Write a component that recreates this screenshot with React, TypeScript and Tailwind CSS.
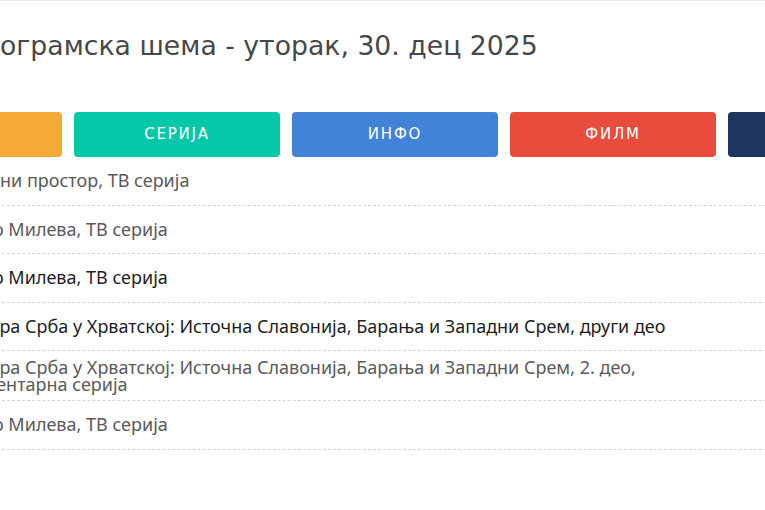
import React from "react";

interface Row {
  title: string;
  active?: boolean;
  pad?: string;
}

const categories = [
  { label: "ЗАБАВА", color: "bg-[#f5aa35]" },
  { label: "СЕРИЈА", color: "bg-[#05c8a8]" },
  { label: "ИНФО", color: "bg-[#4282d7]" },
  { label: "ФИЛМ", color: "bg-[#e84c3d]" },
  { label: "СПОРТ", color: "bg-[#1c365f]" },
];

// the schedule column starts left of the visible window, like the reference
const rows: Row[] = [
  { title: "ни простор, ТВ серија", pad: "pl-[58px]" },
  { title: "о Милева, ТВ серија", pad: "pl-[51px]" },
  { title: "о Милева, ТВ серија", active: true, pad: "pl-[51px]" },
  {
    title:
      "Култура Срба у Хрватској: Источна Славонија, Барања и Западни Срем, други део",
    active: true,
    pad: "indent-[10px]",
  },
  {
    title:
      "Култура Срба у Хрватској: Источна Славонија, Барања и Западни Срем, 2. део, документарна серија",
    pad: "indent-[10px]",
  },
  { title: "о Милева, ТВ серија", pad: "pl-[51px]" },
];

export default function App() {
  return (
    <div
      className="w-[765px] h-[510px] overflow-hidden bg-white border-t border-[#ececec]"
      style={{ fontFamily: '"Noto Sans", "Open Sans", sans-serif' }}
    >
      <h1
        className="mt-[25px] h-[40px] text-[26.7px] leading-[40px] text-[#474747] whitespace-nowrap"
        style={{ fontFamily: '"DejaVu Sans", "Noto Sans", sans-serif' }}
      >
        ограмска шема - уторак, 30. дец 2025
      </h1>

      <div className="mt-[46px] flex gap-[12px] -ml-[144px]">
        {categories.map((c) => (
          <div
            key={c.label}
            className={`${c.color} w-[206px] h-[45px] shrink-0 rounded-[4px] flex items-center justify-center text-white text-[15px] tracking-[1.8px]`}
            style={{ fontFamily: '"DejaVu Sans", sans-serif' }}
          >
            {c.label}
          </div>
        ))}
      </div>

      <div className="w-[880px] -ml-[58px]">
        {rows.map((r, i) => (
          <div
            key={i}
            className="min-h-[48.5px] py-[7.5px] flex items-center border-b border-dashed border-[#d4d4d4]"
          >
            <p
              className={`max-w-[792px] text-[18px] leading-[17px] ${
                r.active ? "text-[#1e1e1e]" : "text-[#5a5a5a]"
              } ${r.pad ?? ""}`}
            >
              {r.title}
            </p>
          </div>
        ))}
      </div>
    </div>
  );
}
